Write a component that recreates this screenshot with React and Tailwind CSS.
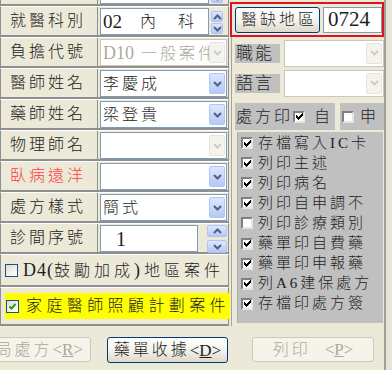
import React from 'react'

const SERIF = "font-['Liberation_Serif','Noto_Sans_CJK_TC',serif]"

// classic windows check glyph, pixel rows [x, y, w]
const CHECK = [[6, 0, 1], [5, 1, 2], [0, 2, 1], [4, 2, 3], [0, 3, 2], [3, 3, 3], [0, 4, 5], [1, 5, 3], [2, 6, 1]]

function ClassicCheck({ checked }) {
  return (
    <div className="w-[12px] h-[12px] shrink-0 bg-white border-2 border-t-[#808080] border-l-[#808080] border-b-[#e4e4e4] border-r-[#e4e4e4] flex items-center justify-center">
      {checked && (
        <svg width="7" height="7" viewBox="0 0 7 7" shapeRendering="crispEdges">
          {CHECK.map(([x, y, w]) => (
            <rect key={`${x}-${y}`} x={x} y={y} width={w} height="1" fill="#000" />
          ))}
        </svg>
      )}
    </div>
  )
}

function XpCheck({ checked }) {
  return (
    <div className="w-[13px] h-[13px] shrink-0 border border-[#1c5180] bg-linear-to-br from-[#dcdcd7] to-white flex items-center justify-center">
      {checked && (
        <svg width="9" height="9" viewBox="0 0 9 9">
          <polyline points="1.5,4.5 3.5,6.5 7.5,2" fill="none" stroke="#21a121" strokeWidth="2" />
        </svg>
      )}
    </div>
  )
}

function Chev({ up, color = '#4d6185', w = 9, h = 6 }) {
  return (
    <svg width={w} height={h} viewBox="0 0 9 6">
      <polyline points={up ? '1,5 4.5,1.5 8,5' : '1,1 4.5,4.5 8,1'} fill="none" stroke={color} strokeWidth="2" />
    </svg>
  )
}

function DropBtn({ disabled }) {
  if (disabled) {
    return (
      <div className="w-[16px] h-[21px] shrink-0 mr-px rounded-[2px] border border-[#e6e4dc] bg-[#f4f3ee] flex items-center justify-center">
        <Chev color="#cfcdc2" />
      </div>
    )
  }
  return (
    <div className="w-[16px] h-[21px] shrink-0 mr-px rounded-[2px] border border-[#b0c4f4] bg-linear-to-b from-[#dde7fe] to-[#b5c9f6] flex items-center justify-center">
      <Chev />
    </div>
  )
}

function SpinBtn({ up, className }) {
  return (
    <div className={`rounded-[2px] border border-[#b0c4f4] bg-linear-to-b from-[#dde7fe] to-[#b5c9f6] flex items-center justify-center ${className}`}>
      <Chev up={up} />
    </div>
  )
}

function Combo({ className = 'w-[127px]', disabled, btnDisabled, children }) {
  return (
    <div className={`h-[27px] bg-white border ${disabled ? 'border-[#c9c7ba]' : 'border-[#7f9db9]'} flex items-center ${className}`}>
      <div className="flex-1 overflow-hidden whitespace-nowrap pl-[2px] text-[16px] tracking-[3px] leading-none">{children}</div>
      <DropBtn disabled={disabled || btnDisabled} />
    </div>
  )
}

function Row({ label, labelClass = 'text-[#222]', children }) {
  return (
    <div className="h-[31px] w-[229px] shrink-0 flex border-t border-t-white border-b-2 border-b-[#8f8f8f] border-x border-x-[#8f8f8f]">
      <div className={`w-[97px] border-r border-r-[#8f8f8f] flex items-center pl-[9px] text-[16px] tracking-[3px] ${labelClass}`}>{label}</div>
      <div className="flex-1 flex items-end pl-[2px]">{children}</div>
    </div>
  )
}

function DeptField({ children }) {
  return (
    <>
      <div className="w-[109px] h-[27px] bg-white border border-[#7f9db9] flex items-center pl-[2px] whitespace-nowrap">{children}</div>
      <div className="ml-[2px] mb-[1px] w-[12px] h-[23px] flex flex-col gap-px">
        <SpinBtn up className="h-[11px]" />
        <SpinBtn className="h-[11px]" />
      </div>
    </>
  )
}

function LeftColumn() {
  return (
    <div className="w-[229px] flex flex-col">
      {/* row cut off by the window top */}
      <div className="h-[6px] overflow-hidden">
        <div className="-mt-[25px]">
          <Row label="">
            <DeptField />
          </Row>
        </div>
      </div>

      <Row label="就醫科別">
        <DeptField>
          <span className="text-[19px] leading-none">02</span>
          <span className="ml-[18px] text-[16px] leading-none">內</span>
          <span className="ml-[22px] text-[16px] leading-none">科</span>
        </DeptField>
      </Row>
      <Row label="負擔代號">
        <Combo disabled>
          <span className="text-[#aca899]"><span className="text-[18px] tracking-normal">D10</span> 一般案件</span>
        </Combo>
      </Row>
      <Row label="醫師姓名">
        <Combo>李慶成</Combo>
      </Row>
      <Row label="藥師姓名">
        <Combo>梁登貴</Combo>
      </Row>
      <Row label="物理師名">
        <Combo btnDisabled />
      </Row>
      <Row label="臥病遠洋" labelClass="text-[#ff3b3b]">
        <Combo />
      </Row>
      <Row label="處方樣式">
        <Combo>簡式</Combo>
      </Row>
      <Row label="診間序號">
        <div className="w-[98px] h-[27px] bg-white border border-[#7f9db9] flex items-center pl-[15px] text-[20px] leading-none">1</div>
        <div className="ml-[9px] self-stretch w-[20px] flex flex-col justify-between">
          <SpinBtn up className="h-[12px] mt-px" />
          <SpinBtn className="h-[13px] -mb-[1px]" />
        </div>
      </Row>

      <div className="h-[33px] w-[229px] flex items-center pl-[4px] border-t border-t-white border-b-2 border-b-[#8f8f8f] border-x border-x-[#8f8f8f]">
        <XpCheck />
        <span className="ml-[5px] text-[16px] tracking-[4px] whitespace-nowrap leading-none">
          <span className="tracking-[1px] text-[18px]">D4(</span>鼓勵加成<span className="text-[18px]">)</span>地區案件
        </span>
      </div>

      <div className="h-[39px] w-[229px] flex items-center pl-[4px] pr-[1px] border-t border-t-white border-b-2 border-b-[#8f8f8f] border-x border-x-[#8f8f8f]">
        <div className="h-[26px] flex-1 bg-[#ffff00] flex items-center pl-[1px]">
          <XpCheck checked />
          <span className="ml-[7px] text-[16px] tracking-[4.4px] whitespace-nowrap leading-none">家庭醫師照顧計劃案件</span>
        </div>
      </div>
    </div>
  )
}

function GrayLabel({ children }) {
  return (
    <div className="w-[45px] h-[19px] bg-[#c0c0c0] flex items-center pl-[1px] text-[17px] tracking-[2px] leading-none">{children}</div>
  )
}

const PRINT_OPTS = [
  { t: '存檔寫入IC卡', on: true },
  { t: '列印主述', on: true },
  { t: '列印病名', on: true },
  { t: '列印自申調不', on: true },
  { t: '列印診療類別', on: false },
  { t: '藥單印自費藥', on: true },
  { t: '藥單印申報藥', on: true },
  { t: '列A6建保處方', on: true },
  { t: '存檔印處方簽', on: true },
]

function RightColumn() {
  return (
    <div className="w-[155px] flex flex-col">
      {/* highlighted shortage-area box */}
      <div className="ml-[1px] mt-[2px] w-[154px] h-[35px] border-2 border-[#e0121c] flex items-center pl-[3px] gap-[3px]">
        <div className="w-[85px] h-[26px] rounded-[3px] border border-[#003c74] bg-linear-to-b from-white via-[#f4f3ee] to-[#dcd8cc] flex items-center justify-center text-[16px] tracking-[3px] leading-none pl-[3px]">
          醫缺地區
        </div>
        <div className="w-[59px] h-[26px] bg-white border border-[#7f9db9] flex items-center pl-[4px] text-[21px] leading-none">0724</div>
      </div>

      <div className="flex-1 ml-[2px] border-l border-l-[#a5a39a] pl-[3px] flex flex-col">
        <div className="mt-[3px] h-[26px] flex items-center gap-[4px]">
          <GrayLabel>職能</GrayLabel>
          <Combo disabled className="w-[100px]" />
        </div>
        <div className="mt-[4px] h-[26px] flex items-center gap-[4px]">
          <GrayLabel>語言</GrayLabel>
          <Combo disabled className="w-[100px]" />
        </div>
        <div className="mt-[7px] h-[27px] flex gap-[5px]">
          <div className="w-[100px] bg-[#c0c0c0] flex items-center pl-[1px] text-[16px] leading-none">
            <span className="tracking-[3px]">處方印</span>
            <ClassicCheck checked />
            <span className="ml-[9px]">自</span>
          </div>
          <div className="w-[44px] bg-[#c0c0c0] flex items-center pl-[2px] text-[16px] leading-none">
            <ClassicCheck />
            <span className="ml-[6px]">申</span>
          </div>
        </div>
        <div className="mt-[2px] ml-[2px] w-[146px] h-[191px] bg-[#c0c0c0] border-l border-l-[#a9a9a9] pt-[1px] pl-[3px]">
          {PRINT_OPTS.map(o => (
            <div key={o.t} className="h-[20.1px] flex items-center">
              <ClassicCheck checked={o.on} />
              <span className="ml-[5px] text-[15px] tracking-[3px] whitespace-nowrap leading-none">{o.t}</span>
            </div>
          ))}
        </div>
      </div>
    </div>
  )
}

function ButtonBar() {
  const key = 'text-[17px] tracking-normal'
  return (
    <div className="h-[44px] flex items-start pt-[11px] whitespace-nowrap">
      <div className="-ml-[9px] w-[100px] h-[25px] rounded-[3px] border border-[#cbc8b8] bg-[#f5f4ea] flex items-center justify-end pr-[7px] text-[16px] tracking-[3px] text-[#aca899] leading-none">
        局處方<span className={key}>&lt;<span className="underline">R</span>&gt;</span>
      </div>
      <div className="ml-[16px] w-[121px] h-[26px] rounded-[3px] border border-[#003c74] bg-linear-to-b from-white via-[#f4f3ee] to-[#dcd8cc] flex items-center justify-center text-[16px] tracking-[3px] leading-none">
        藥單收據 <span className={key}>&lt;<span className="underline">D</span>&gt;</span>
      </div>
      <div className="ml-[24px] w-[122px] h-[25px] rounded-[3px] border border-[#cbc8b8] bg-[#f5f4ea] flex items-center justify-center text-[16px] tracking-[3px] text-[#aca899] leading-none">
        列印 &nbsp;<span className={key}>&lt;<span className="underline">P</span>&gt;</span>
      </div>
    </div>
  )
}

export default function App() {
  return (
    <div className={`w-[392px] h-[370px] overflow-hidden bg-[#ece9d8] flex font-light ${SERIF} text-[#1e1e1e]`}>
      <div className="w-[384px] flex flex-col">
        <div className="h-[326px] flex">
          <LeftColumn />
          <RightColumn />
        </div>
        <ButtonBar />
      </div>
      <div className="w-[2px] bg-[#a09e95]" />
      <div className="w-[6px] bg-[#e6e4da]" />
    </div>
  )
}
